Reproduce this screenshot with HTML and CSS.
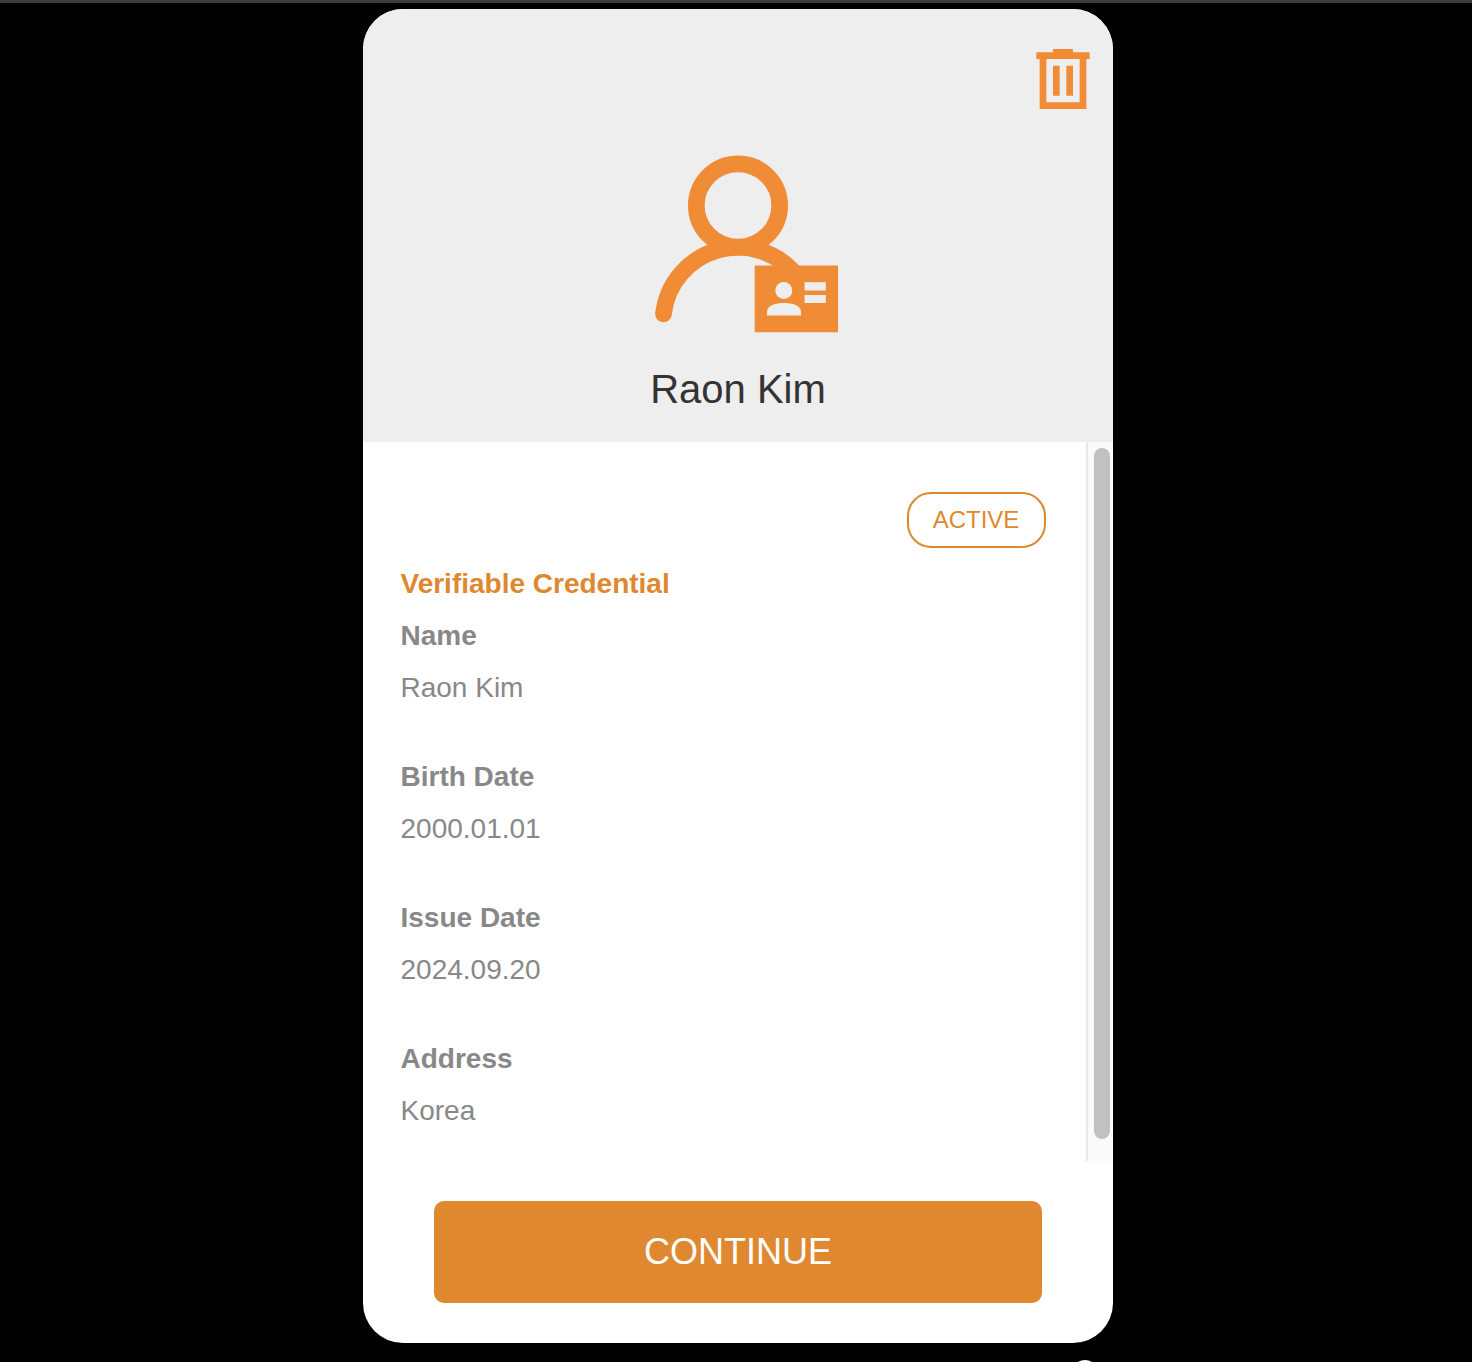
FILE: index.html
```html
<!DOCTYPE html>
<html lang="en">
<head>
<meta charset="utf-8">
<title>Verifiable Credential</title>
<link rel="stylesheet" href="styles.css">
</head>
<body>
<div class="screen">
  <div class="top-line"></div>
  <main class="card">
    <header class="card-header">
      <button class="delete" aria-label="Delete">
        <svg class="trash" viewBox="-0.1 0 16.2 18" fill="#f08c35">
          <path fill-rule="evenodd" d="M0 1H5V0H11V1H16V3H15V18H1V3H0ZM3 3V16H13V3Z"/>
          <path d="M5 5H7V14H5ZM9 5H11V14H9Z"/>
        </svg>
      </button>
      <svg class="avatar" viewBox="638 139 200 200">
        <g fill="none" stroke="#f08c35" stroke-width="16.67" stroke-linecap="round">
          <circle cx="738" cy="205.5" r="41.67"/>
          <path d="M663.5 314A75 75 0 0 1 797 276"/>
        </g>
        <path fill="#f08c35" d="M754.7 265.5H838V332.2H754.7Z"/>
        <g fill="#eee">
          <circle cx="783.8" cy="290.6" r="8.5"/>
          <path d="M767 315.6V312C767 305.5 776 303.1 784 303.1S801 305.5 801 312V315.6Z"/>
          <path d="M804.6 282.2H825.8V290.6H804.6ZM804.6 295H825.8V303H804.6Z"/>
        </g>
      </svg>
      <h1 class="holder">Raon Kim</h1>
    </header>
    <section class="card-body">
      <div class="details">
        <span class="status">ACTIVE</span>
        <h2 class="heading">Verifiable Credential</h2>
        <dl class="fields">
          <div><dt>Name</dt><dd>Raon Kim</dd></div>
          <div><dt>Birth Date</dt><dd>2000.01.01</dd></div>
          <div><dt>Issue Date</dt><dd>2024.09.20</dd></div>
          <div><dt>Address</dt><dd>Korea</dd></div>
        </dl>
      </div>
      <div class="scrollbar"><div class="thumb"></div></div>
    </section>
    <footer class="card-footer">
      <button class="continue">CONTINUE</button>
    </footer>
  </main>
  <div class="knob"></div>
</div>
</body>
</html>
```
FILE: styles.css
```css
* {
  box-sizing: border-box;
  margin: 0;
}

body {
  background: #000;
  font-family: "Liberation Sans", Arial, sans-serif;
}

.screen {
  position: relative;
  height: 1362px;
  overflow: hidden;
}

.top-line {
  height: 3px;
  background: #3c3c3c;
}

.card {
  display: flex;
  flex-direction: column;
  width: 750px;
  height: 1334px;
  margin: 6px 0 0 363px;
  border-radius: 40px;
  background: #fff;
  overflow: hidden;
}

.card-header {
  display: flex;
  flex-direction: column;
  align-items: center;
  height: 433px;
  padding-top: 40px;
  background: #eee;
}

.delete {
  align-self: flex-end;
  height: 60px;
  margin-right: 23px;
  padding: 0;
  border: 0;
  background: none;
}

.trash {
  display: block;
  width: 54px;
  height: 60px;
}

.avatar {
  width: 200px;
  height: 200px;
  margin: 30px 0 26px;
}

.holder {
  font-size: 40px;
  font-weight: 400;
  line-height: 48px;
  color: #333;
}

.card-body {
  display: flex;
  height: 719px;
}

.details {
  display: flex;
  flex: 1;
  flex-direction: column;
  padding: 50px 40px 0 37.5px;
}

.status {
  align-self: flex-end;
  width: 139px;
  height: 56px;
  padding-right: 1px;
  border: 2px solid #df8830;
  border-radius: 24px;
  font-size: 24px;
  line-height: 52px;
  text-align: center;
  color: #df8830;
}

.heading {
  margin-top: 10px;
  font-size: 28px;
  line-height: 52px;
  color: #df8830;
}

.fields {
  display: flex;
  flex-direction: column;
  gap: 37px;
  font-size: 28px;
  line-height: 52px;
  color: #888;
}

.fields dt {
  font-weight: 700;
}

.scrollbar {
  width: 27px;
  padding: 6px 3px 0 6px;
  border-left: 2px solid #e8e8e8;
  background: #fafafa;
}

.thumb {
  height: 691px;
  border-radius: 8px;
  background: #c1c1c1;
}

.card-footer {
  padding: 40px 71px;
}

.continue {
  display: block;
  width: 608px;
  height: 102px;
  border: 0;
  border-radius: 10px;
  background: #df8830;
  font: 36px "Liberation Sans", Arial, sans-serif;
  color: #fff;
}

.knob {
  width: 26px;
  height: 26px;
  margin: 17px 0 0 1072px;
  border-radius: 50%;
  background: #fff;
}
```
